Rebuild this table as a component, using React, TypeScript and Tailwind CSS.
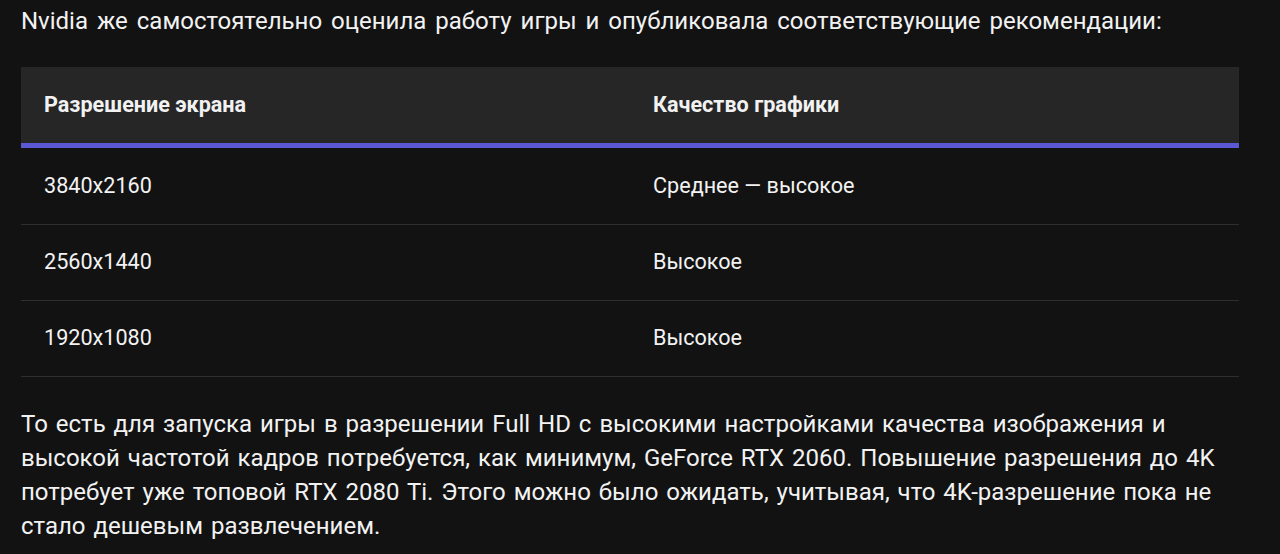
import React from "react";

const rows = [
  ["3840x2160", "Среднее — высокое"],
  ["2560x1440", "Высокое"],
  ["1920x1080", "Высокое"],
];

export default function App() {
  return (
    <div
      className="w-[1280px] h-[554px] overflow-hidden bg-[#121212] text-[#f2f2f2] pl-[21px] pr-[41px]"
      style={{ fontFamily: "Roboto, 'Noto Sans', sans-serif" }}
    >
      <p className="text-[24px] leading-[34px] pt-[4px] whitespace-nowrap [word-spacing:3px]">
        Nvidia же самостоятельно оценила работу игры и опубликовала соответствующие рекомендации:
      </p>
      <div className="mt-[29px] w-full">
        <div className="grid grid-cols-2 h-[76px] items-center bg-[#262626] font-bold text-[21.6px]">
          <div className="pl-[23px]">Разрешение экрана</div>
          <div className="pl-[23px]">Качество графики</div>
        </div>
        <div className="h-[5px] bg-[#5b58d6]" />
        {rows.map((r, i) => (
          <div
            key={i}
            className={`grid grid-cols-2 h-[76px] items-center text-[21.6px] ${i > 0 ? "border-t border-[#2e2e2e]" : ""}`}
          >
            <div className="pl-[23px]">{r[0]}</div>
            <div className="pl-[23px]">{r[1]}</div>
          </div>
        ))}
        <div className="h-px bg-[#2e2e2e]" />
      </div>
      <p className="text-[24px] leading-[34px] mt-[30px] [word-spacing:2px]">
        То есть для запуска игры в разрешении Full HD с высокими настройками качества изображения и
        высокой частотой кадров потребуется, как минимум, GeForce RTX 2060. Повышение разрешения до 4K
        потребует уже топовой RTX 2080 Ti. Этого можно было ожидать, учитывая, что 4K-разрешение пока не
        стало дешевым развлечением.
      </p>
    </div>
  );
}
